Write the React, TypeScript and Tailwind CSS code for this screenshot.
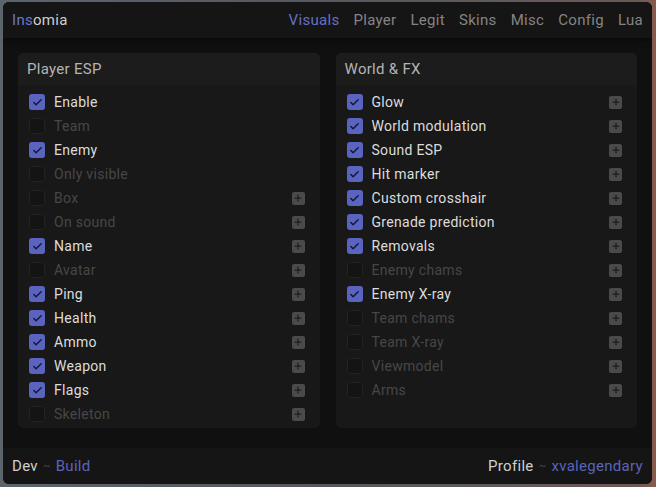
import { Plus, Check } from 'lucide-react'

type Item = { label: string; on: boolean; extra?: boolean }

const playerEsp: Item[] = [
  { label: 'Enable', on: true },
  { label: 'Team', on: false },
  { label: 'Enemy', on: true },
  { label: 'Only visible', on: false },
  { label: 'Box', on: false, extra: true },
  { label: 'On sound', on: false, extra: true },
  { label: 'Name', on: true, extra: true },
  { label: 'Avatar', on: false, extra: true },
  { label: 'Ping', on: true, extra: true },
  { label: 'Health', on: true, extra: true },
  { label: 'Ammo', on: true, extra: true },
  { label: 'Weapon', on: true, extra: true },
  { label: 'Flags', on: true, extra: true },
  { label: 'Skeleton', on: false, extra: true },
]

const worldFx: Item[] = [
  { label: 'Glow', on: true, extra: true },
  { label: 'World modulation', on: true, extra: true },
  { label: 'Sound ESP', on: true, extra: true },
  { label: 'Hit marker', on: true, extra: true },
  { label: 'Custom crosshair', on: true, extra: true },
  { label: 'Grenade prediction', on: true, extra: true },
  { label: 'Removals', on: true, extra: true },
  { label: 'Enemy chams', on: false, extra: true },
  { label: 'Enemy X-ray', on: true, extra: true },
  { label: 'Team chams', on: false, extra: true },
  { label: 'Team X-ray', on: false, extra: true },
  { label: 'Viewmodel', on: false, extra: true },
  { label: 'Arms', on: false, extra: true },
]

const tabs = ['Visuals', 'Player', 'Legit', 'Skins', 'Misc', 'Config', 'Lua']

function Row({ item }: { item: Item }) {
  return (
    <div className="h-[24px] flex items-center pl-[11px] pr-[15px]">
      {item.on ? (
        <span className="w-[16px] h-[16px] rounded-[3px] bg-[#5a63c0] flex items-center justify-center">
          <Check size={11} strokeWidth={3} className="text-[#14162e]" />
        </span>
      ) : (
        <span className="w-[16px] h-[16px] rounded-[3px] bg-[#141414] border border-[#222]" />
      )}
      <span className={`ml-[9px] text-[14px] ${item.on ? 'text-[#dcdcdc]' : 'text-[#474747]'}`}>
        {item.label}
      </span>
      {item.extra && (
        <span className="ml-auto w-[13px] h-[13px] rounded-[2px] bg-[#4a4a4a] flex items-center justify-center">
          <Plus size={10} strokeWidth={3} className="text-[#1e1e1e]" />
        </span>
      )}
    </div>
  )
}

function Panel({ title, items }: { title: string; items: Item[] }) {
  return (
    <div className="w-[302px] h-[375px] rounded-[5px] bg-[#181818] flex flex-col overflow-hidden">
      <div className="h-[32px] px-[9px] flex items-center bg-[#1c1c1c] text-[15px] text-[#b4b4b4]">
        {title}
      </div>
      <div className="pt-[5px]">
        {items.map((it) => (
          <Row key={it.label} item={it} />
        ))}
      </div>
    </div>
  )
}

export default function App() {
  return (
    <div
      className="w-[656px] h-[487px] pt-[2px] pl-[3px] tracking-[0.3px] bg-[linear-gradient(90deg,#5c646c_0%,#55585e_50%,#6a5a56_97%,#8a5a4a_100%)]"
      style={{ fontFamily: 'Roboto, "Open Sans", sans-serif' }}
    >
      <div className="w-[649px] h-[482px] rounded-[6px] bg-[#101010] flex flex-col overflow-hidden">
        <div className="h-[36px] px-[9px] flex items-center bg-[#151515] shadow-[0_2px_6px_rgba(0,0,0,0.5)]">
          <span className="text-[15px]">
            <span className="text-[#6d76c9]">Ins</span>
            <span className="text-[#cfcfcf]">omia</span>
          </span>
          <div className="ml-auto flex gap-[14px] text-[15px]">
            {tabs.map((t, i) => (
              <span key={t} className={i === 0 ? 'text-[#6770c4]' : 'text-[#848484]'}>
                {t}
              </span>
            ))}
          </div>
        </div>
        <div className="flex-1 pt-[15px] px-[15px] flex gap-[16px]">
          <Panel title="Player ESP" items={playerEsp} />
          <Panel title="World & FX" items={worldFx} />
        </div>
        <div className="h-[36px] px-[9px] flex items-center bg-[#151515] text-[15px]">
          <span className="text-[#d0d0d0]">Dev</span>
          <span className="mx-[5px] text-[#4a4a4a] text-[11px]">~</span>
          <span className="text-[#5b64b8]">Build</span>
          <span className="ml-auto text-[#d0d0d0]">Profile</span>
          <span className="mx-[5px] text-[#4a4a4a] text-[11px]">~</span>
          <span className="text-[#5b64b8]">xvalegendary</span>
        </div>
      </div>
    </div>
  )
}
